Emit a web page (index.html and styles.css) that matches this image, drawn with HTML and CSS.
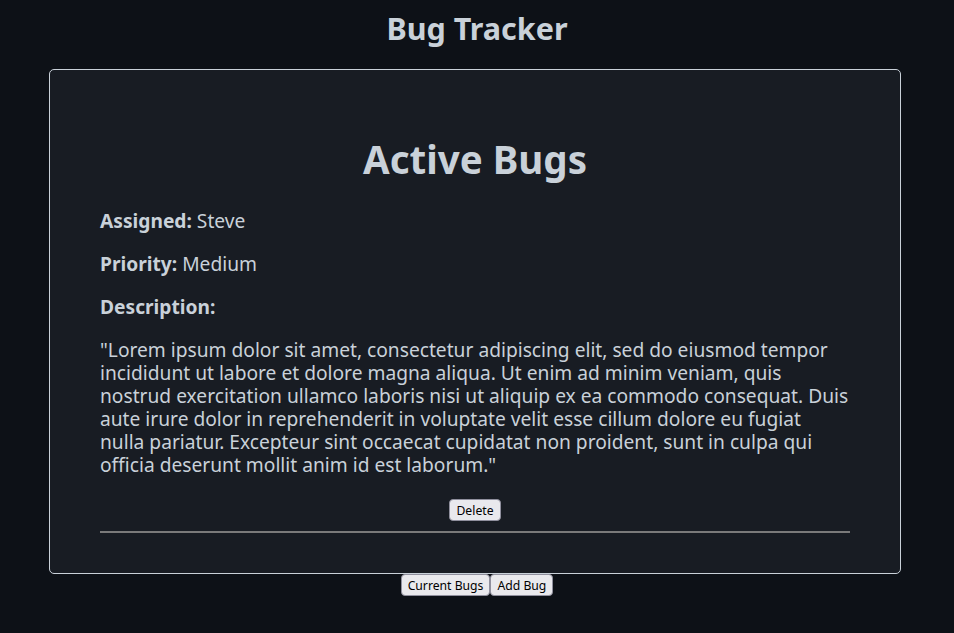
FILE: index.html
```html
<!DOCTYPE html>
<html>
<head>
<meta charset="utf-8">
<link rel="stylesheet" href="styles.css">
</head>
<body>
<h1 class="title">Bug Tracker</h1>
<div class="card">
  <h2 class="card-title">Active Bugs</h2>
  <div class="bug">
    <p class="field"><strong>Assigned:</strong> Steve</p>
    <p class="field"><strong>Priority:</strong> Medium</p>
    <p class="field"><strong>Description:</strong></p>
    <p class="desc">"Lorem ipsum dolor sit amet, consectetur adipiscing elit, sed do eiusmod tempor incididunt ut labore et dolore magna aliqua. Ut enim ad minim veniam, quis nostrud exercitation ullamco laboris nisi ut aliquip ex ea commodo consequat. Duis aute irure dolor in reprehenderit in voluptate velit esse cillum dolore eu fugiat nulla pariatur. Excepteur sint occaecat cupidatat non proident, sunt in culpa qui officia deserunt mollit anim id est laborum."</p>
    <div class="actions"><button class="btn">Delete</button></div>
    <hr class="divider">
  </div>
</div>
<nav class="nav"><button class="btn">Current Bugs</button><button class="btn">Add Bug</button></nav>
</body>
</html>
```

FILE: styles.css
```css
body {
  margin: 0;
  padding: 10px 0 0;
  background: #0d1117;
  color: #c9d1d9;
  font-family: "Noto Sans", sans-serif;
}
.title {
  margin: 0 0 22px;
  text-align: center;
  font-size: 30.5px;
  line-height: 37px;
  font-weight: bold;
}
.card {
  width: 750px;
  margin: 0 auto;
  padding: 50px 50px 40px;
  border: 1px solid #c9d1d9;
  border-radius: 5px;
  background: #181c23;
  position: relative;
  left: -2px;
}
.card-title {
  margin: 16px 0 27px;
  text-align: center;
  font-size: 38.5px;
  line-height: 46px;
}
.field, .desc {
  margin: 0 0 20px;
  font-size: 19.2px;
  line-height: 23px;
}
.actions {
  display: flex;
  justify-content: center;
  padding-top: 3px;
}
.btn {
  font-family: "Noto Sans", sans-serif;
  font-size: 12.2px;
  line-height: 17px;
  color: #000;
  background: #e9e9ed;
  border: 1px solid #8f8f9d;
  border-radius: 4px;
  padding: 2px 6px 1px;
}
.divider {
  margin: 10px 0 0;
  border: 0;
  border-top: 2px solid #7a7a7a;
}
.nav {
  display: flex;
  justify-content: center;
}
```
